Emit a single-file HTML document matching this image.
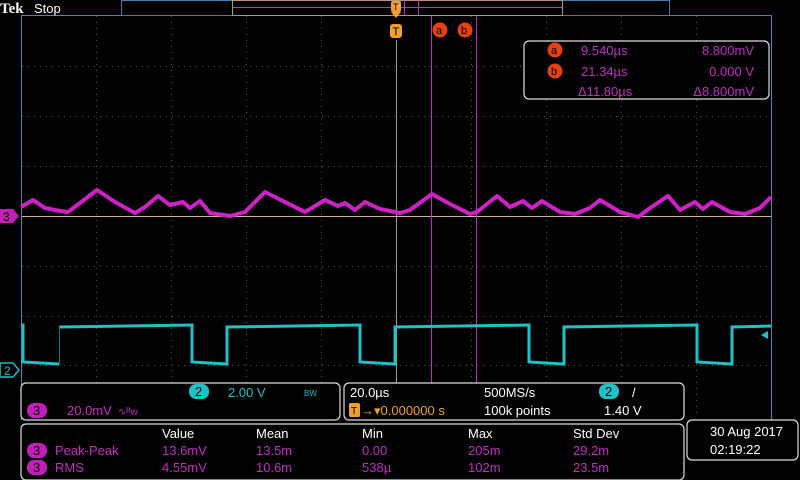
<!DOCTYPE html>
<html><head><meta charset="utf-8"><style>
body{margin:0;background:#000;width:800px;height:480px;overflow:hidden;font-family:"Liberation Sans",sans-serif}
svg{display:block}
text{font-family:"Liberation Sans",sans-serif}
</style></head><body>
<svg width="800" height="480" viewBox="0 0 800 480" xmlns="http://www.w3.org/2000/svg">
<g stroke="#555" stroke-width="1" stroke-dasharray="1 5">
<line x1="96.5" y1="16" x2="96.5" y2="415"/><line x1="171.5" y1="16" x2="171.5" y2="415"/><line x1="246.5" y1="16" x2="246.5" y2="415"/><line x1="321.5" y1="16" x2="321.5" y2="415"/><line x1="471.5" y1="16" x2="471.5" y2="415"/><line x1="546.5" y1="16" x2="546.5" y2="415"/><line x1="621.5" y1="16" x2="621.5" y2="415"/><line x1="696.5" y1="16" x2="696.5" y2="415"/>
<line x1="22" y1="66.5" x2="771" y2="66.5"/><line x1="22" y1="116.5" x2="771" y2="116.5"/><line x1="22" y1="166.5" x2="771" y2="166.5"/><line x1="22" y1="266.5" x2="771" y2="266.5"/><line x1="22" y1="316.5" x2="771" y2="316.5"/><line x1="22" y1="365.5" x2="771" y2="365.5"/>
</g>
<line x1="21.5" y1="15" x2="21.5" y2="420" stroke="#5a80b0"/>
<line x1="771.5" y1="15" x2="771.5" y2="420" stroke="#5a80b0"/>
<line x1="21" y1="15.5" x2="772" y2="15.5" stroke="#5a80b0"/>
<rect x="121.5" y="0.5" width="548" height="15" fill="none" stroke="#4d7aa8"/>
<rect x="232.5" y="0.5" width="330" height="15" fill="none" stroke="#a89a80"/>
<line x1="233" y1="7.5" x2="562" y2="7.5" stroke="#c030c0"/>
<line x1="404.5" y1="0" x2="404.5" y2="15" stroke="#c030c0"/>
<line x1="418.5" y1="0" x2="418.5" y2="15" stroke="#c030c0"/>
<line x1="396.5" y1="40" x2="396.5" y2="383" stroke="#a09a80"/>
<line x1="22" y1="216.5" x2="771" y2="216.5" stroke="#c8b496"/>
<line x1="431.5" y1="16" x2="431.5" y2="383" stroke="#c030c0"/>
<line x1="476.5" y1="16" x2="476.5" y2="383" stroke="#c030c0"/>
<polyline fill="none" stroke="#d020c8" stroke-width="4" stroke-linejoin="round" points="21,207 33,200 45,208 60,211 68,212 80,203 97,190 115,202 135,213 145,207 158,196 170,205 183,202 190,208 200,201 210,213 230,216 245,212 265,192 285,202 305,212 325,200 338,206 345,203 355,210 365,202 380,209 400,213 410,210 432,194 450,204 470,214 477,212 497,196 510,207 523,201 532,208 542,201 560,212 575,214 590,208 600,200 620,212 638,217 650,208 668,196 680,210 695,202 703,209 712,202 730,212 745,214 760,208 771,197"/>
<g fill="none" stroke="#20c0c8" stroke-width="3">
<polyline points="21,325 23,325 23,362 59,364"/>
<polyline points="59,327 192,325 192,362 227,364 227,327 360,325 360,362 395,364 395,327 529,325 529,362 564,364 564,327 697,325 697,362 732,364 732,327 771,326"/>
</g>
<g stroke="#1a7a80" stroke-width="1"><line x1="59.5" y1="327" x2="59.5" y2="364"/></g>
<polygon points="761,335 768,331 768,339" fill="#20c0c8"/>
<polygon points="0,209 13,209 19,216 13,223 0,223" fill="#c020b8"/>
<text x="3" y="221" font-size="12" fill="#000">3</text>
<polygon points="0,363 13,363 19,370 13,377 0,377" fill="#000" stroke="#20c0c8" stroke-width="1.5"/>
<text x="4" y="375" font-size="12" fill="#20c0c8">2</text>
<rect x="391" y="1" width="10" height="11" rx="2" fill="#f0a030"/>
<text x="393" y="10" font-size="9" fill="#000">T</text>
<polygon points="391,12 401,12 396,18" fill="#f0a030"/>
<rect x="390" y="24" width="12" height="14" rx="3" fill="#f0a030"/>
<text x="392.5" y="35" font-size="11" fill="#000">T</text>
<circle cx="440" cy="30" r="7.5" fill="#e84010"/><text x="436" y="34" font-size="11" fill="#000">a</text>
<circle cx="465" cy="30" r="7.5" fill="#e84010"/><text x="461" y="34" font-size="11" fill="#000">b</text>
<text x="0" y="13" font-size="15" font-weight="bold" fill="#fff" style="font-family:'Liberation Serif'">Tek</text>
<text x="34" y="13" font-size="13" fill="#fff">Stop</text>
<rect x="524" y="41" width="245" height="58" rx="5" fill="#000" stroke="#ddd" stroke-width="1.2"/>
<g font-size="13" fill="#c030c0">
<circle cx="555" cy="50" r="7.5" fill="#e84010"/><text x="551" y="54" fill="#000" font-size="11">a</text>
<circle cx="555" cy="71" r="7.5" fill="#e84010"/><text x="551" y="75" fill="#000" font-size="11">b</text>
<text x="581" y="55">9.540µs</text><text x="754" y="55" text-anchor="end">8.800mV</text>
<text x="581" y="76">21.34µs</text><text x="754" y="76" text-anchor="end">0.000 V</text>
<text x="578" y="96">Δ11.80µs</text><text x="754" y="96" text-anchor="end">Δ8.800mV</text>
</g>
<rect x="21" y="383" width="319" height="37" rx="5" fill="#000" stroke="#ddd" stroke-width="1.2"/>
<rect x="344" y="383" width="340" height="37" rx="5" fill="#000" stroke="#ddd" stroke-width="1.2"/>
<rect x="21" y="424" width="663" height="56" rx="5" fill="#000" stroke="#ddd" stroke-width="1.2"/>
<rect x="687" y="420" width="111" height="40" rx="5" fill="#000" stroke="#ddd" stroke-width="1.2"/>
<g font-size="13">
<rect x="189" y="384" width="20" height="15" rx="7" fill="#20c0c8"/><text x="195" y="396" fill="#000">2</text>
<text x="228" y="397" fill="#20c0c8">2.00 V</text>
<text x="304" y="396" fill="#20c0c8" font-size="8">BW</text>
<rect x="27" y="403" width="20" height="15" rx="7" fill="#c020b8"/><text x="33" y="415" fill="#000">3</text>
<text x="67" y="415" fill="#c030c0">20.0mV</text>
<text x="118" y="415" fill="#c030c0" font-size="10">∿ᴮw</text>
<text x="350" y="397" fill="#fff">20.0µs</text>
<text x="484" y="397" fill="#fff">500MS/s</text>
<rect x="599" y="384" width="20" height="15" rx="7" fill="#20c0c8"/><text x="605" y="396" fill="#000">2</text>
<text x="632" y="397" fill="#fff">/</text>
<rect x="349" y="403" width="11" height="14" rx="2" fill="#f0a030"/><text x="351" y="414" fill="#000" font-size="10">T</text>
<text x="361" y="415" fill="#f0a030">→▾0.000000 s</text>
<text x="484" y="415" fill="#fff">100k points</text>
<text x="604" y="415" fill="#fff">1.40 V</text>
<text x="162" y="438" fill="#fff">Value</text><text x="256" y="438" fill="#fff">Mean</text><text x="362" y="438" fill="#fff">Min</text><text x="468" y="438" fill="#fff">Max</text><text x="573" y="438" fill="#fff">Std Dev</text>
<rect x="27" y="443" width="20" height="15" rx="7" fill="#c020b8"/><text x="33" y="455" fill="#000">3</text>
<rect x="27" y="460" width="20" height="15" rx="7" fill="#c020b8"/><text x="33" y="472" fill="#000">3</text>
<g fill="#c030c0">
<text x="55" y="455">Peak-Peak</text><text x="162" y="455">13.6mV</text><text x="256" y="455">13.5m</text><text x="362" y="455">0.00</text><text x="468" y="455">205m</text><text x="573" y="455">29.2m</text>
<text x="55" y="472">RMS</text><text x="162" y="472">4.55mV</text><text x="256" y="472">10.6m</text><text x="362" y="472">538µ</text><text x="468" y="472">102m</text><text x="573" y="472">23.5m</text>
</g>
<text x="710" y="436" fill="#fff">30 Aug 2017</text>
<text x="710" y="454" fill="#fff">02:19:22</text>
</g>
</svg>
</body></html>
